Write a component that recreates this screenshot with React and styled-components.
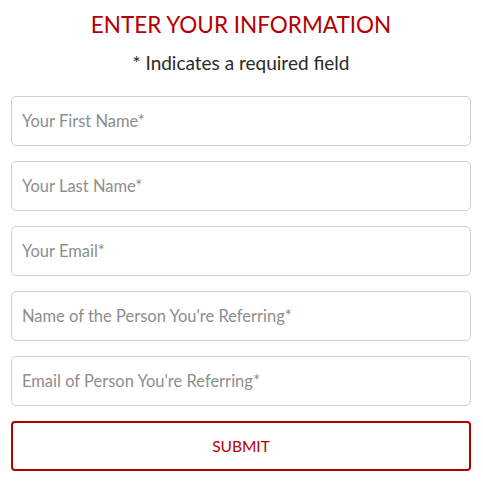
import React from "react";
import styled, { createGlobalStyle } from "styled-components";

const GlobalStyle = createGlobalStyle`
  body {
    margin: 0;
    background: #fff;
    font-family: Lato, "Open Sans", sans-serif;
  }
`;

const Wrap = styled.form`
  padding: 8px 12px 0 11px;
  display: flex;
  flex-direction: column;
`;

const Title = styled.h2`
  margin: 0;
  text-align: center;
  color: #b30000;
  font-weight: 400;
  font-size: 22.5px;
  line-height: 34px;
`;

const Note = styled.p`
  margin: 9px 0 21px;
  text-align: center;
  color: #2a2a2a;
  font-size: 19px;
  line-height: 24px;
`;

const Field = styled.input`
  box-sizing: border-box;
  height: 50px;
  width: 100%;
  margin-bottom: 15px;
  padding: 0 10px;
  border: 1px solid #cfcfcf;
  border-radius: 5px;
  font-family: inherit;
  font-size: 16.5px;
  color: #333;
  outline: none;
  &::placeholder {
    color: #8e8e8e;
  }
`;

const SubmitBtn = styled.button`
  box-sizing: border-box;
  height: 50px;
  width: 100%;
  background: #fff;
  border: 2px solid #b00000;
  border-radius: 4px;
  color: #b00000;
  font-family: inherit;
  font-size: 15.5px;
  cursor: pointer;
`;

const fields = [
  "Your First Name*",
  "Your Last Name*",
  "Your Email*",
  "Name of the Person You're Referring*",
  "Email of Person You're Referring*",
];

export default function App() {
  return (
    <>
      <GlobalStyle />
      <Wrap onSubmit={(e) => e.preventDefault()}>
        <Title>ENTER YOUR INFORMATION</Title>
        <Note>* Indicates a required field</Note>
        {fields.map((f) => (
          <Field key={f} placeholder={f} />
        ))}
        <SubmitBtn type="submit">SUBMIT</SubmitBtn>
      </Wrap>
    </>
  );
}
